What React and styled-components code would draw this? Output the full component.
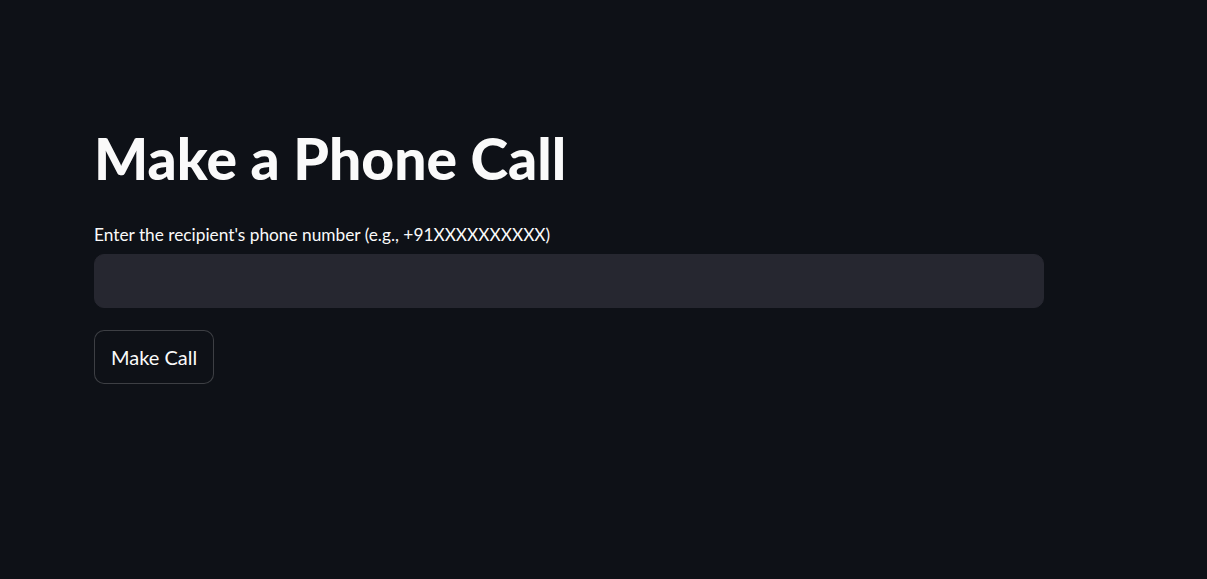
import React from "react";
import styled, { createGlobalStyle } from "styled-components";

const GlobalStyle = createGlobalStyle`
  html, body {
    margin: 0;
    padding: 0;
    background: #0e1117;
    height: 100%;
  }
  body {
    font-family: Lato, "Noto Sans", sans-serif;
    color: #fafafa;
  }
`;

const Page = styled.main`
  min-height: 100vh;
  background: #0e1117;
  padding: 120px 0 0 94px;
  box-sizing: border-box;
`;

const Block = styled.div`
  width: 950px;
  display: flex;
  flex-direction: column;
`;

const Title = styled.h1`
  margin: 0;
  font-size: 57px;
  font-weight: 900;
  line-height: 76px;
  letter-spacing: 0;
  color: #fafafa;
`;

const Field = styled.div`
  margin-top: 27px;
  display: flex;
  flex-direction: column;
  gap: 7px;
`;

const Label = styled.label`
  font-size: 17.3px;
  line-height: 24px;
  color: #fafafa;
`;

const Input = styled.input`
  height: 54px;
  box-sizing: border-box;
  border: 1px solid #262730;
  border-radius: 10px;
  background: #262730;
  color: #fafafa;
  font-family: inherit;
  font-size: 18px;
  padding: 0 16px;
  outline: none;
`;

const Button = styled.button`
  margin-top: 22px;
  align-self: flex-start;
  height: 54px;
  padding: 0 16px;
  border: 1px solid rgba(250, 250, 250, 0.2);
  border-radius: 10px;
  background: #0e1117;
  color: #fafafa;
  font-family: inherit;
  font-size: 20px;
  cursor: pointer;
`;

export default function App() {
  return (
    <>
      <GlobalStyle />
      <Page>
        <Block>
          <Title>Make a Phone Call</Title>
          <Field>
            <Label htmlFor="phone">
              Enter the recipient's phone number (e.g., +91XXXXXXXXXX)
            </Label>
            <Input id="phone" type="text" />
          </Field>
          <Button>Make Call</Button>
        </Block>
      </Page>
    </>
  );
}
